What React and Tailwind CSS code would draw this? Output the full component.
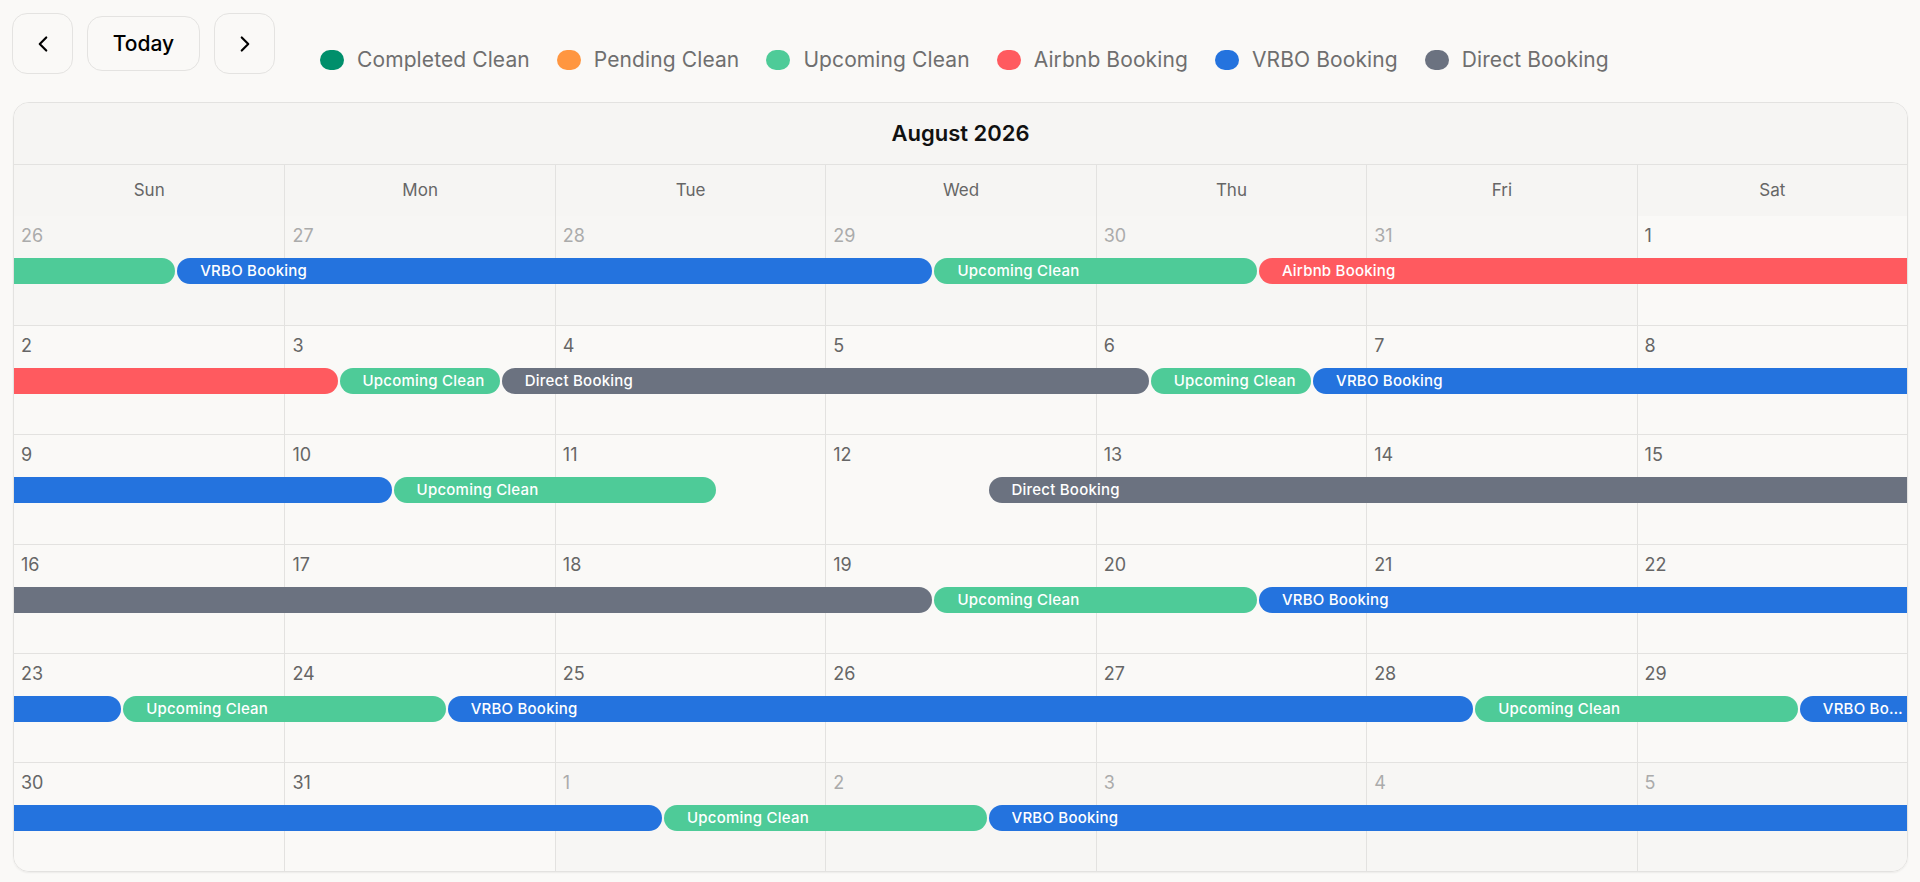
import React from "react";
import { ChevronLeft, ChevronRight } from "lucide-react";

const COLORS = {
  completed: "bg-[#008f6b]",
  pending: "bg-[#ff9640]",
  upcoming: "bg-[#4ecb98]",
  airbnb: "bg-[#ff5a5f]",
  vrbo: "bg-[#2473de]",
  direct: "bg-[#6b7280]",
};

const legend = [
  { key: "completed", label: "Completed Clean" },
  { key: "pending", label: "Pending Clean" },
  { key: "upcoming", label: "Upcoming Clean" },
  { key: "airbnb", label: "Airbnb Booking" },
  { key: "vrbo", label: "VRBO Booking" },
  { key: "direct", label: "Direct Booking" },
];

const dayNames = ["Sun", "Mon", "Tue", "Wed", "Thu", "Fri", "Sat"];

// days of each week, muted = outside of August
const weeks = [
  {
    days: [26, 27, 28, 29, 30, 31, 1].map((d, i) => ({ d, muted: i < 6 })),
    events: [
      { start: 0, end: 0.6, type: "upcoming" },
      { start: 0.6, end: 3.4, type: "vrbo", label: "VRBO Booking" },
      { start: 3.4, end: 4.6, type: "upcoming", label: "Upcoming Clean" },
      { start: 4.6, end: 7, type: "airbnb", label: "Airbnb Booking" },
    ],
  },
  {
    days: [2, 3, 4, 5, 6, 7, 8].map((d) => ({ d, muted: false })),
    events: [
      { start: 0, end: 1.2, type: "airbnb" },
      { start: 1.2, end: 1.8, type: "upcoming", label: "Upcoming Clean" },
      { start: 1.8, end: 4.2, type: "direct", label: "Direct Booking" },
      { start: 4.2, end: 4.8, type: "upcoming", label: "Upcoming Clean" },
      { start: 4.8, end: 7, type: "vrbo", label: "VRBO Booking" },
    ],
  },
  {
    days: [9, 10, 11, 12, 13, 14, 15].map((d) => ({ d, muted: false })),
    events: [
      { start: 0, end: 1.4, type: "vrbo" },
      { start: 1.4, end: 2.6, type: "upcoming", label: "Upcoming Clean" },
      { start: 3.6, end: 7, type: "direct", label: "Direct Booking" },
    ],
  },
  {
    days: [16, 17, 18, 19, 20, 21, 22].map((d) => ({ d, muted: false })),
    events: [
      { start: 0, end: 3.4, type: "direct" },
      { start: 3.4, end: 4.6, type: "upcoming", label: "Upcoming Clean" },
      { start: 4.6, end: 7, type: "vrbo", label: "VRBO Booking" },
    ],
  },
  {
    days: [23, 24, 25, 26, 27, 28, 29].map((d) => ({ d, muted: false })),
    events: [
      { start: 0, end: 0.4, type: "vrbo" },
      { start: 0.4, end: 1.6, type: "upcoming", label: "Upcoming Clean" },
      { start: 1.6, end: 5.4, type: "vrbo", label: "VRBO Booking" },
      { start: 5.4, end: 6.6, type: "upcoming", label: "Upcoming Clean" },
      { start: 6.6, end: 7, type: "vrbo", label: "VRBO Booking" },
    ],
  },
  {
    days: [30, 31, 1, 2, 3, 4, 5].map((d, i) => ({ d, muted: i > 1 })),
    events: [
      { start: 0, end: 2.4, type: "vrbo" },
      { start: 2.4, end: 3.6, type: "upcoming", label: "Upcoming Clean" },
      { start: 3.6, end: 7, type: "vrbo", label: "VRBO Booking" },
    ],
  },
];

const EventLane = ({ events }) => {
  const pieces = [];
  let cursor = 0;
  events.forEach((ev, i) => {
    if (ev.start > cursor) {
      pieces.push(
        <div
          key={`gap-${i}`}
          className="shrink-0"
          style={{ width: `${((ev.start - cursor) / 7) * 100}%` }}
        />
      );
    }
    const roundLeft = ev.start > 0;
    const roundRight = ev.end < 7;
    pieces.push(
      <div
        key={i}
        className={`shrink-0 h-full ${roundLeft ? "pl-px" : ""} ${roundRight ? "pr-px" : ""}`}
        style={{ width: `${((ev.end - ev.start) / 7) * 100}%` }}
      >
        <div
          className={`h-full flex items-center pl-[23px] pr-1 text-white text-[15px] font-[450] tracking-[0.015em] ${COLORS[ev.type]} ${
            roundLeft ? "rounded-l-[13px]" : ""
          } ${roundRight ? "rounded-r-[13px]" : ""}`}
        >
          <span className="truncate leading-[26px]">{ev.label}</span>
        </div>
      </div>
    );
    cursor = ev.end;
  });
  return (
    <div className="absolute left-0 right-0 top-[42px] h-[26px] flex">{pieces}</div>
  );
};

export default function App() {
  return (
    <div
      className="min-h-screen bg-[#faf9f7] pl-[13px] pr-[12px] pt-[13px]"
      style={{ fontFamily: "Inter, 'Noto Sans', sans-serif" }}
    >
      {/* toolbar */}
      <div className="flex items-end">
        <div className="flex items-center gap-[14px] -ml-px">
          <button className="w-[61px] h-[61px] rounded-[15px] border border-[#e4e3e1] bg-[#faf9f7] flex items-center justify-center text-black">
            <ChevronLeft size={26} strokeWidth={2} />
          </button>
          <button className="w-[113px] h-[55px] rounded-[15px] border border-[#e4e3e1] bg-[#faf9f7] text-[21px] font-medium text-black">
            Today
          </button>
          <button className="w-[61px] h-[61px] rounded-[15px] border border-[#e4e3e1] bg-[#faf9f7] flex items-center justify-center text-black">
            <ChevronRight size={26} strokeWidth={2} />
          </button>
        </div>
        <div className="flex items-center gap-[27px] ml-[45px] h-[30px] -mb-[1px]">
          {legend.map((l) => (
            <div key={l.key} className="flex items-center gap-[13px]">
              <span className={`w-[24px] h-[20px] rounded-full ${COLORS[l.key]}`} />
              <span className="text-[21px] leading-[30px] tracking-[0.005em] text-[#6f6f6f]">
                {l.label}
              </span>
            </div>
          ))}
        </div>
      </div>

      {/* calendar card */}
      <div className="mt-[28px] border border-[#e3e2e0] rounded-[16px] overflow-hidden shadow-[0_1px_2px_rgba(0,0,0,0.06)]">
        <div className="h-[62px] bg-[#f6f5f3] border-b border-[#e3e2e0] flex items-center justify-center">
          <h2 className="text-[22px] font-semibold text-[#111]">August 2026</h2>
        </div>
        <div className="grid grid-cols-7 h-[51px] bg-[#f6f5f3]">
          {dayNames.map((n, i) => (
            <div
              key={n}
              className={`flex items-center justify-center text-[17px] text-[#666] ${
                i > 0 ? "border-l border-[#e3e2e0]" : ""
              }`}
            >
              {n}
            </div>
          ))}
        </div>
        <div>
          {weeks.map((w, wi) => (
            <div
              key={wi}
              className={`relative h-[109.2px] ${wi > 0 ? "border-t border-[#e3e2e0]" : ""}`}
            >
              <div className="grid grid-cols-7 h-full">
                {w.days.map((day, di) => (
                  <div
                    key={di}
                    className={`pl-[7px] pt-[6px] ${day.muted ? "bg-[#f7f6f4]" : "bg-[#faf9f7]"} ${
                      di > 0 ? "border-l border-[#e3e2e0]" : ""
                    }`}
                  >
                    <span
                      className={`text-[18px] leading-[28px] ${
                        day.muted ? "text-[#ababab]" : "text-[#666]"
                      }`}
                    >
                      {day.d}
                    </span>
                  </div>
                ))}
              </div>
              <EventLane events={w.events} />
            </div>
          ))}
        </div>
      </div>
    </div>
  );
}
